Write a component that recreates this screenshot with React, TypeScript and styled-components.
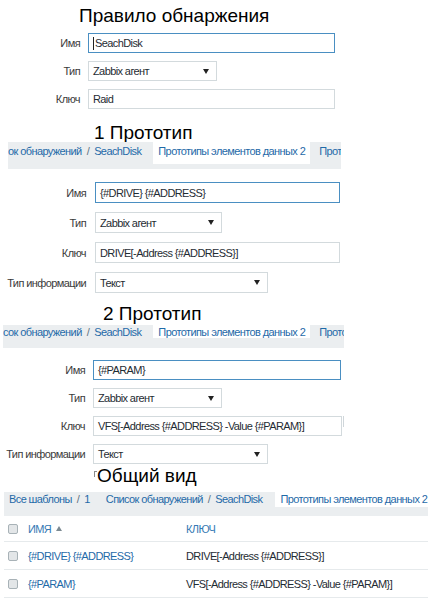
import React from "react";
import styled, { createGlobalStyle } from "styled-components";

const Global = createGlobalStyle`
  html, body { margin: 0; padding: 0; background: #fff; }
  body {
    font-family: "Liberation Sans", Arial, sans-serif;
    font-size: 11px;
    letter-spacing: -0.6px;
    color: #1f2c33;
  }
  * { box-sizing: border-box; }
`;

const Page = styled.div`
  width: 428px;
  height: 600px;
  overflow: hidden;
  display: flex;
  flex-direction: column;
`;

const Title = styled.h1<{ $top: number; $left: number; $size?: number }>`
  margin: ${(p) => p.$top}px 0 0 ${(p) => p.$left}px;
  font-family: "Liberation Sans", Arial, sans-serif;
  font-weight: 400;
  font-size: ${(p) => p.$size ?? 19}px;
  letter-spacing: 0;
  line-height: 22px;
  height: 22px;
  color: #000;
  white-space: nowrap;
  display: flex;
  align-items: flex-start;
`;

const Corner = styled.span`
  display: inline-block;
  width: 3px;
  height: 6px;
  margin-top: 6px;
  border-top: 1px solid #8a8a8a;
  border-left: 1px solid #8a8a8a;
`;

const Form = styled.div<{ $top: number; $label: number; $gap: number; $row: number; $rowGap: number }>`
  display: grid;
  grid-template-columns: ${(p) => p.$label}px auto;
  justify-content: start;
  column-gap: ${(p) => p.$gap}px;
  row-gap: ${(p) => p.$rowGap}px;
  grid-auto-rows: ${(p) => p.$row}px;
  margin-top: ${(p) => p.$top}px;
  align-items: center;
`;

const Label = styled.div`
  text-align: right;
  color: #3b3b3b;
  white-space: nowrap;
`;

const FieldCell = styled.div`
  display: flex;
  align-items: stretch;
  height: 100%;
`;

const Input = styled.div<{ $width: number; $focus?: boolean }>`
  width: ${(p) => p.$width}px;
  height: 100%;
  border: 1px solid ${(p) => (p.$focus ? "#4a8fc2" : "#d3dadd")};
  padding: 0 4px;
  display: flex;
  align-items: center;
  background: #fff;
  color: #1f2c33;
  white-space: nowrap;
  overflow: hidden;
`;

const Select = styled(Input)`
  justify-content: space-between;
  padding-right: 7px;
`;

const Arrow = styled.span`
  width: 0;
  height: 0;
  border-left: 3px solid transparent;
  border-right: 3px solid transparent;
  border-top: 5px solid #222;
`;

const Caret = styled.span`
  display: inline-block;
  width: 1px;
  height: 13px;
  margin-right: 1px;
  background: #222;
`;

const Stub = styled.div`
  width: 3px;
  margin-left: 1px;
  border-left: 1px solid #cfd6da;
  height: 11px;
`;

const TabBar = styled.div<{ $top: number; $left: number; $width?: number; $height: number }>`
  display: flex;
  align-items: flex-start;
  margin: ${(p) => p.$top}px 0 0 ${(p) => p.$left}px;
  ${(p) => (p.$width ? `width: ${p.$width}px;` : "align-self: stretch;")}
  height: ${(p) => p.$height}px;
  flex-shrink: 0;
  background: #ebeef0;
  overflow: hidden;
  white-space: nowrap;
  line-height: 14px;
`;

const Crumbs = styled.div<{ $pt: number; $pl?: number; $ml?: number }>`
  display: flex;
  padding-top: ${(p) => p.$pt}px;
  padding-left: ${(p) => p.$pl ?? 0}px;
  margin-left: ${(p) => p.$ml ?? 0}px;
  color: #1f6aa8;
`;

const Sep = styled.span`
  margin: 0 5px;
  color: #5f7380;
`;

const ActiveTab = styled.div<{ $height: number; $ml: number; $pt: number; $grow?: boolean }>`
  background: #fff;
  height: ${(p) => p.$height}px;
  margin-left: ${(p) => p.$ml}px;
  padding: ${(p) => p.$pt}px 5px 0 5px;
  color: #1f6aa8;
  ${(p) => (p.$grow ? "flex: 1;" : "")}
`;

const NextTab = styled.div<{ $pt: number }>`
  margin-left: 9px;
  padding-top: ${(p) => p.$pt}px;
  color: #1f6aa8;
`;

const Table = styled.div`
  margin-left: 4px;
  display: flex;
  flex-direction: column;
`;

const Row = styled.div<{ $height: number }>`
  display: grid;
  grid-template-columns: 24px 158px 1fr;
  align-items: center;
  height: ${(p) => p.$height}px;
  border-bottom: 1px solid #e6eaec;
  white-space: nowrap;
`;

const Check = styled.span`
  display: block;
  width: 10px;
  height: 10px;
  margin-left: 4px;
  border: 1px solid #a8b2b7;
  border-radius: 2px;
  background: #e3e6e8;
`;

const HeadCell = styled.div`
  color: #3579b4;
  display: flex;
  align-items: center;
`;

const SortUp = styled.span`
  width: 0;
  height: 0;
  margin-left: 5px;
  border-left: 3px solid transparent;
  border-right: 3px solid transparent;
  border-bottom: 5px solid #7c8a92;
`;

const NameLink = styled.div`
  color: #1f6aa8;
`;

const KeyText = styled.div`
  color: #1f2c33;
`;

type FieldDef =
  | { kind: "input"; label: string; value: string; width: number; focus?: boolean; caret?: boolean; stub?: boolean }
  | { kind: "select"; label: string; value: string; width: number };

function FormBlock(props: {
  top: number;
  label: number;
  gap: number;
  row: number;
  rowGap: number;
  fields: FieldDef[];
}) {
  return (
    <Form $top={props.top} $label={props.label} $gap={props.gap} $row={props.row} $rowGap={props.rowGap}>
      {props.fields.map((f) => (
        <React.Fragment key={f.label}>
          <Label>{f.label}</Label>
          <FieldCell>
            {f.kind === "input" ? (
              <>
                <Input $width={f.width} $focus={f.focus}>
                  {f.caret && <Caret />}
                  {f.value}
                </Input>
                {f.stub && <Stub />}
              </>
            ) : (
              <Select $width={f.width}>
                <span>{f.value}</span>
                <Arrow />
              </Select>
            )}
          </FieldCell>
        </React.Fragment>
      ))}
    </Form>
  );
}

export default function App() {
  return (
    <>
      <Global />
      <Page>
        <Title $top={5} $left={79}>Правило обнаржения</Title>
        <FormBlock
          top={6}
          label={80}
          gap={8}
          row={20}
          rowGap={8}
          fields={[
            { kind: "input", label: "Имя", value: "SeachDisk", width: 247, focus: true, caret: true },
            { kind: "select", label: "Тип", value: "Zabbix агент", width: 129 },
            { kind: "input", label: "Ключ", value: "Raid", width: 247 },
          ]}
        />

        <Title $top={13} $left={94}>1 Прототип</Title>
        <TabBar $top={-2} $left={8} $width={333} $height={27}>
          <Crumbs $pt={2}>
            <span>ок обнаружений</span>
            <Sep>/</Sep>
            <span>SeachDisk</span>
          </Crumbs>
          <ActiveTab $height={22} $ml={12} $pt={2}>Прототипы элементов данных 2</ActiveTab>
          <NextTab $pt={2}>Прототипы триггеров</NextTab>
        </TabBar>
        <FormBlock
          top={13}
          label={86}
          gap={9}
          row={21}
          rowGap={9}
          fields={[
            { kind: "input", label: "Имя", value: "{#DRIVE} {#ADDRESS}", width: 245, focus: true },
            { kind: "select", label: "Тип", value: "Zabbix агент", width: 127 },
            { kind: "input", label: "Ключ", value: "DRIVE[-Address {#ADDRESS}]", width: 245 },
            { kind: "select", label: "Тип информации", value: "Текст", width: 173 },
          ]}
        />

        <Title $top={10} $left={103}>2 Прототип</Title>
        <TabBar $top={0} $left={3} $width={341} $height={23}>
          <Crumbs $pt={0}>
            <span>сок обнаружений</span>
            <Sep>/</Sep>
            <span>SeachDisk</span>
          </Crumbs>
          <ActiveTab $height={13} $ml={12} $pt={0}>Прототипы элементов данных 2</ActiveTab>
          <NextTab $pt={0}>Прототипы триггеров</NextTab>
        </TabBar>
        <FormBlock
          top={12}
          label={85}
          gap={8}
          row={20}
          rowGap={8}
          fields={[
            { kind: "input", label: "Имя", value: "{#PARAM}", width: 248, focus: true },
            { kind: "select", label: "Тип", value: "Zabbix агент", width: 129 },
            { kind: "input", label: "Ключ", value: "VFS[-Address {#ADDRESS} -Value {#PARAM}]", width: 249, stub: true },
            { kind: "select", label: "Тип информации", value: "Текст", width: 175 },
          ]}
        />

        <Title $top={1} $left={94}>
          <Corner />
          Общий вид
        </Title>
        <TabBar $top={5} $left={4} $height={24}>
          <Crumbs $pt={0} $pl={5}>
            <span>Все шаблоны</span>
            <Sep>/</Sep>
            <span>1</span>
          </Crumbs>
          <Crumbs $pt={0} $ml={16}>
            <span>Список обнаружений</span>
            <Sep>/</Sep>
            <span>SeachDisk</span>
          </Crumbs>
          <ActiveTab $height={15} $ml={13} $pt={0} $grow>Прототипы элементов данных 2</ActiveTab>
        </TabBar>
        <Table>
          <Row $height={26}>
            <Check />
            <HeadCell>
              ИМЯ
              <SortUp />
            </HeadCell>
            <HeadCell>КЛЮЧ</HeadCell>
          </Row>
          <Row $height={28}>
            <Check />
            <NameLink>{"{#DRIVE} {#ADDRESS}"}</NameLink>
            <KeyText>{"DRIVE[-Address {#ADDRESS}]"}</KeyText>
          </Row>
          <Row $height={28}>
            <Check />
            <NameLink>{"{#PARAM}"}</NameLink>
            <KeyText>{"VFS[-Address {#ADDRESS} -Value {#PARAM}]"}</KeyText>
          </Row>
        </Table>
      </Page>
    </>
  );
}
